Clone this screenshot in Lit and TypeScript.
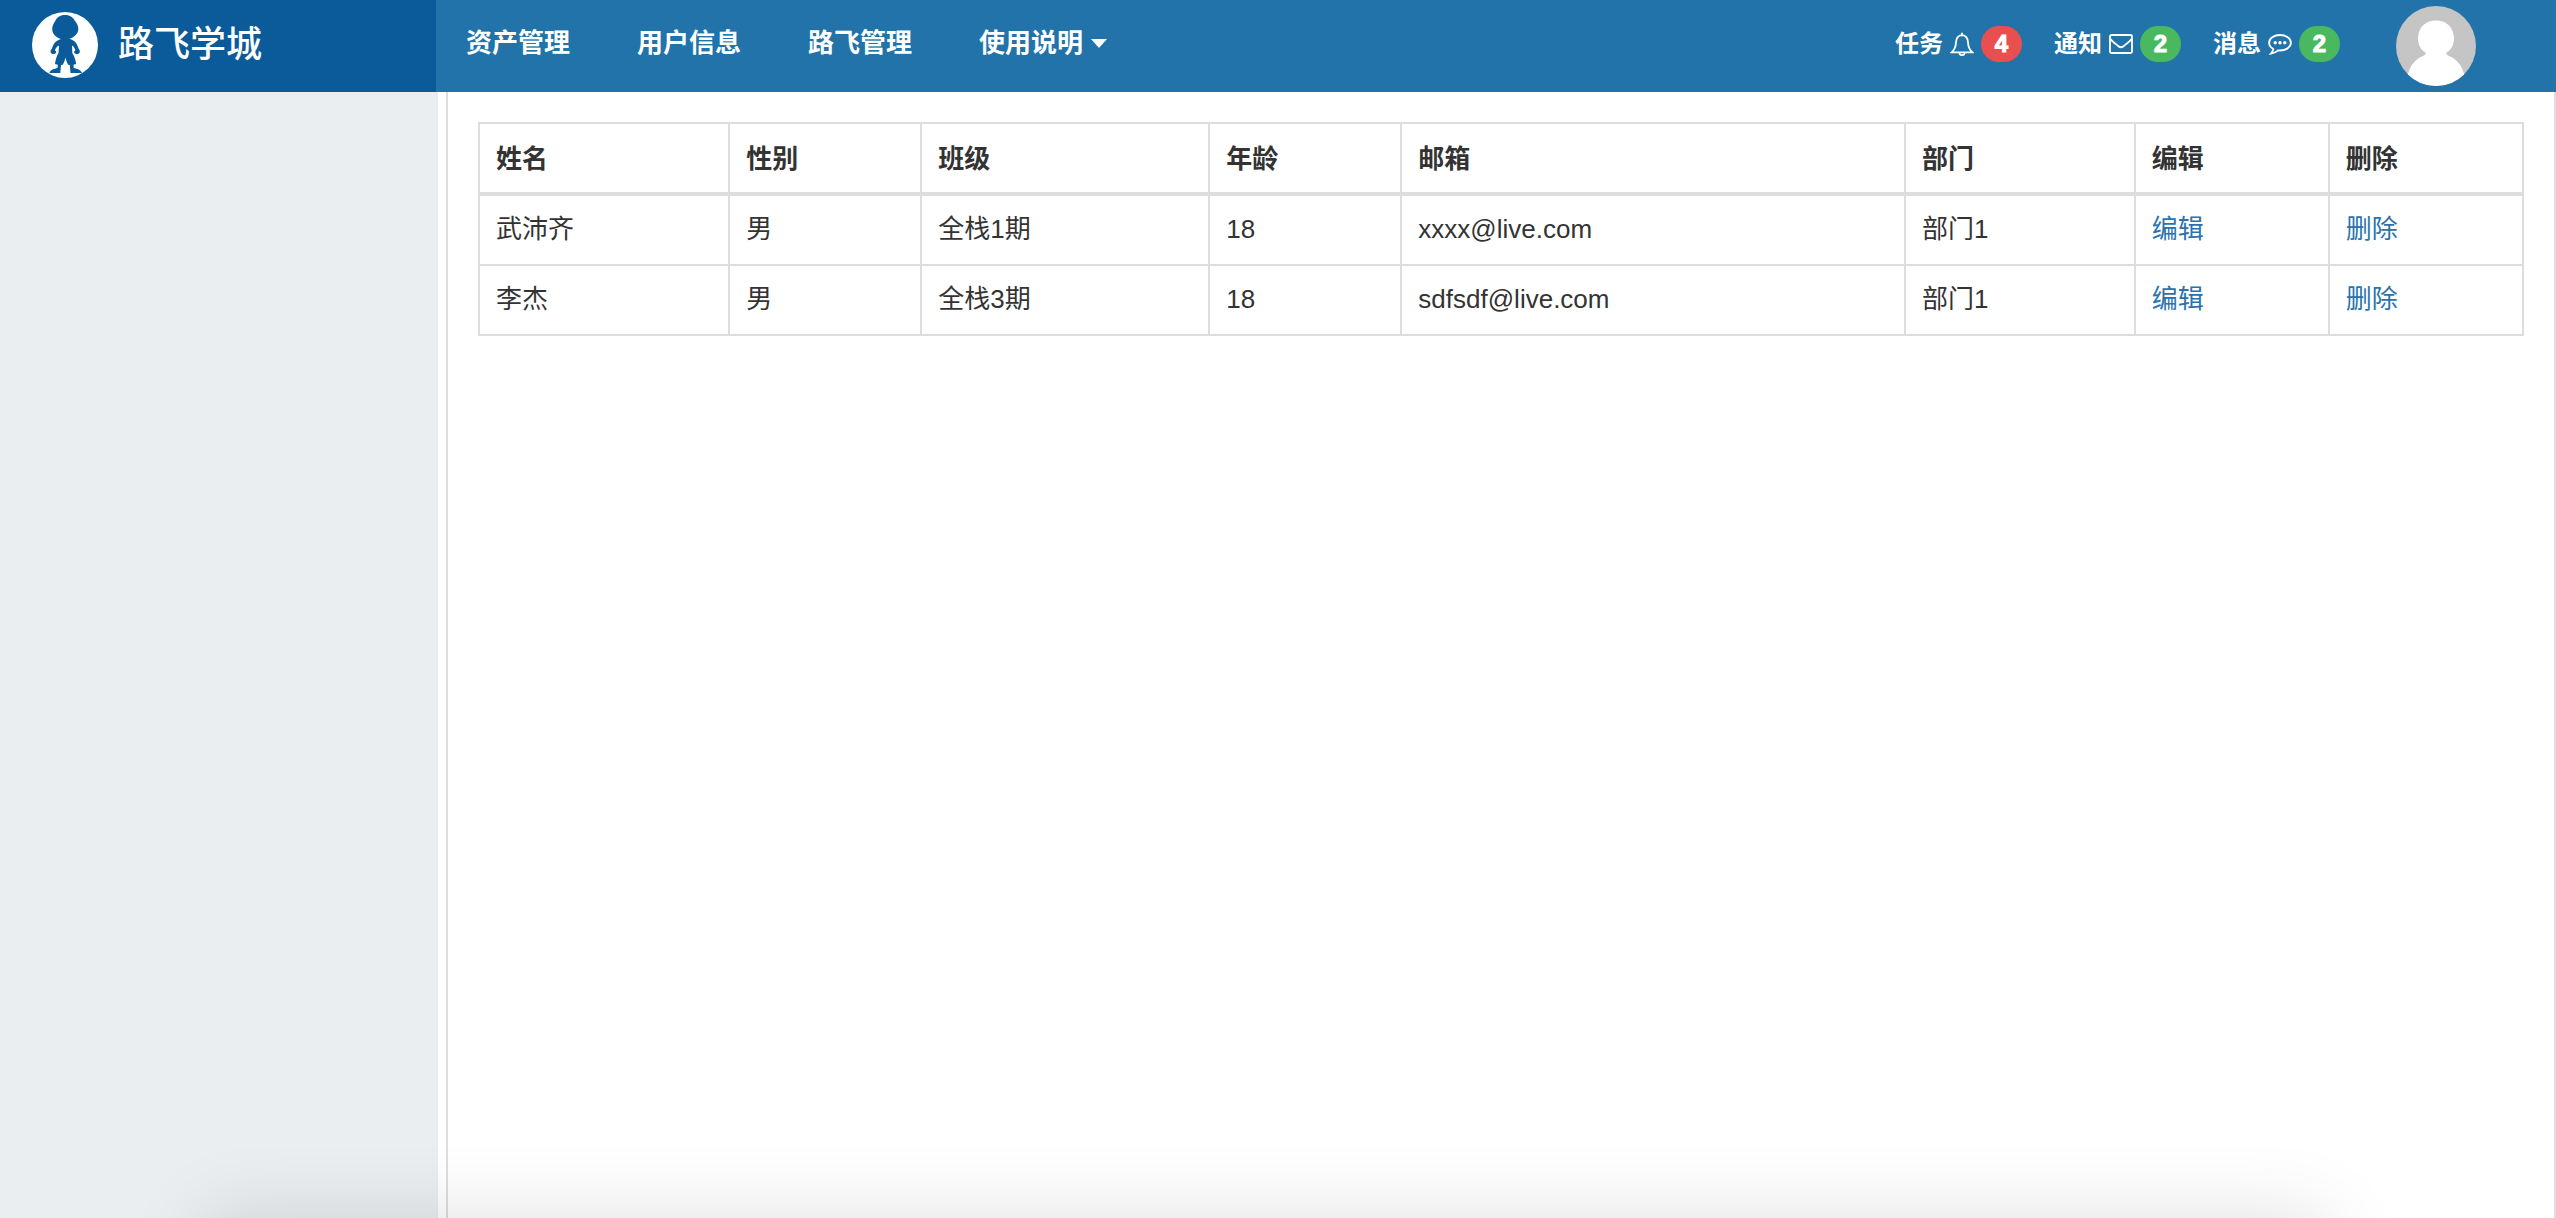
import { LitElement, html, css, svg } from "lit";
import { customElement, property } from "lit/decorators.js";

interface Student {
  name: string;
  gender: string;
  group: string;
  age: number;
  email: string;
  department: string;
}

const students: Student[] = [
  { name: "武沛齐", gender: "男", group: "全栈1期", age: 18, email: "xxxx@live.com", department: "部门1" },
  { name: "李杰", gender: "男", group: "全栈3期", age: 18, email: "sdfsdf@live.com", department: "部门1" },
];

const icons = {
  bell: svg`
    <path d="M12 3.2C8 3.600 6 7 5.900 11 5.800 15.500 4.400 17.800 1.600 20.300h20.800c-2.800-2.500-4.200-4.800-4.300-9.300C18 7 16 3.600 12 3.200z"/>
    <path d="M12 3.200V.8M9.400 20.800a2.600 2.400 0 0 0 5.200 0"/>`,
  mail: svg`
    <rect x="1" y="3" width="22" height="18" rx="1.500"/>
    <path d="M1.200 6.800c2.200 2.600 5.300 4.900 8.300 7.400 1.700 1.400 3.300 1.400 5 0 3-2.500 6.100-4.800 8.300-7.400"/>`,
  chat: svg`
    <path d="M12 3C6 3 1.100 6.400 1.100 10.800c0 2.600 1.600 4.800 4.200 6.200-.3 1.900-1.100 3.300-2.400 4.700 2.800-.4 5.300-1.500 7.200-3.300.6.100 1.300.1 1.900.1 6 0 10.900-3.400 10.900-7.700S18 3 12 3z"/>
    <g fill="currentColor" stroke="none"><circle cx="7.200" cy="10.800" r="1.700"/><circle cx="12" cy="10.800" r="1.700"/><circle cx="16.800" cy="10.800" r="1.700"/></g>`,
};

@customElement("notice-link")
export class NoticeLink extends LitElement {
  @property() label = "";
  @property() icon: keyof typeof icons = "bell";
  @property({ type: Number }) count = 0;
  @property() tone = "green";

  static styles = css`
    :host { display: block; }
    .link {
      display: flex;
      align-items: center;
      color: #fff;
      font-size: 24px;
      line-height: 36px;
      font-weight: 700;
      text-decoration: none;
    }
    .icon {
      width: 24px;
      height: 24px;
      margin: 0 7px;
      fill: none;
      stroke: currentColor;
      stroke-width: 1.8;
    }
    .badge {
      box-sizing: border-box;
      min-width: 41px;
      padding: 0 12px;
      border-radius: 20px;
      background: #4ab85f;
      text-align: center;
      -webkit-text-stroke: 1px #fff;
    }
    .red { background: #e8504f; }
  `;

  render() {
    return html`<a class="link" href="#">
      <span>${this.label}</span>
      <svg class="icon" viewBox="0 0 24 24" aria-hidden="true">${icons[this.icon]}</svg>
      <span class="badge ${this.tone}">${this.count}</span>
    </a>`;
  }
}

@customElement("app-root")
export class AppRoot extends LitElement {
  static styles = css`
    :host {
      display: flex;
      flex-direction: column;
      position: relative;
      min-height: 100vh;
      overflow: hidden;
      background: #fff;
      color: #333;
      font-family: "Liberation Sans", "Noto Sans CJK SC", sans-serif;
      font-size: 26px;
      line-height: 36px;
    }
    a { color: #2a73ad; text-decoration: none; }
    .header {
      display: flex;
      height: 92px;
      background: #2173a9;
    }
    .brand {
      box-sizing: border-box;
      display: flex;
      align-items: center;
      gap: 20px;
      flex: 0 0 436px;
      padding: 0 32px 2px;
      background: #0b5b9a;
      color: #fff;
      font-size: 36px;
      line-height: 48px;
      font-weight: 500;
    }
    .logo { width: 66px; height: 66px; }
    .nav {
      display: flex;
      align-items: center;
      gap: 67px;
      flex: 1;
      padding: 0 30px 6px;
    }
    .nav-link {
      display: flex;
      align-items: center;
      gap: 8px;
      color: #fff;
      font-weight: 700;
    }
    .caret {
      border: 8px solid transparent;
      border-top: 9px solid #fff;
      border-bottom: 0;
    }
    .notices {
      display: flex;
      align-items: center;
      gap: 32px;
      padding: 0 56px 4px 0;
    }
    .account {
      display: flex;
      align-items: center;
      padding-right: 80px;
    }
    .avatar { display: block; width: 80px; height: 80px; }
    .body { display: flex; flex: 1; }
    .sidebar {
      box-sizing: border-box;
      flex: 0 0 438px;
      background: #eaeef1;
      border-right: 2px solid #ebe9f5;
    }
    .main {
      flex: 1;
      margin-left: 8px;
      padding: 30px;
      border: solid #ddd;
      border-width: 0 2px;
    }
    .table {
      width: 100%;
      table-layout: fixed;
      border-collapse: collapse;
    }
    .table th, .table td {
      padding: 15px 16px 17px;
      border: 2px solid #ddd;
      text-align: left;
    }
    .table thead th {
      padding: 17px 16px 15px;
      border-bottom-width: 4px;
    }
    .c-name { width: 12.25%; }
    .c-short { width: 9.4%; }
    .c-group { width: 14.1%; }
    .c-mail { width: 24.65%; }
    .c-dept { width: 11.25%; }
    .c-action { width: 9.5%; }
    .dock-shadow {
      position: absolute;
      top: 100%;
      left: 8%;
      right: 9%;
      height: 120px;
      box-shadow: 0 0 80px rgba(0, 0, 0, 0.13);
      pointer-events: none;
    }
  `;

  render() {
    return html`
      <header class="header">
        <a class="brand" href="#">
          <svg class="logo" viewBox="0 0 66 66" aria-hidden="true">
            <circle cx="33" cy="33" r="33" fill="#fff"/>
            <g fill="#0b5b9a">
              <path d="M33 3c4 0 7.500 1.500 9.700 5.500 2.500 3 3.900 6 3.600 9C45.800 23 40 27.500 33 27.500S20.500 23 20.200 17.500c-.2-3 1.300-6 3.300-9C25.500 4.500 29 3 33 3z"/>
              <path d="M29 27H38C42 28 45 31 46.500 36.500C48 38 48.300 40 47.200 41.300C46 42.500 43.500 42.400 42.300 41C41.800 40 42.300 39 43.300 38.600C42.800 36 41.800 34.500 40 33.500L40.300 41C42.500 44 43.500 48 44.200 52L41.500 52.800L41.800 56C45 57 49 57.500 50 61H38.500L37.800 53L36 52.800C34.800 50.500 34 48 33.500 45.500C33 48 32 50.500 30.800 52.800L29 53L28.300 61H17.500C18 57.500 22.500 57 25.500 56L25.800 52.800L23 52C23.500 48 24.500 44 26.500 41L27 33.500C25 34.500 23.500 36 23 38.600C24 39 24.600 40 24 41C22.800 42.400 20.300 42.500 19.200 41.300C18 40 18.500 38 20 36.500C21.500 31 25 28 29 27Z"/>
            </g>
          </svg>
          <span>路飞学城</span>
        </a>
        <nav class="nav">
          <a class="nav-link" href="#">资产管理</a>
          <a class="nav-link" href="#">用户信息</a>
          <a class="nav-link" href="#">路飞管理</a>
          <a class="nav-link" href="#">使用说明<span class="caret"></span></a>
        </nav>
        <div class="notices">
          <notice-link label="任务" icon="bell" count="4" tone="red"></notice-link>
          <notice-link label="通知" icon="mail" count="2"></notice-link>
          <notice-link label="消息" icon="chat" count="2"></notice-link>
        </div>
        <a class="account" href="#" aria-label="账户">
          <svg class="avatar" viewBox="0 0 80 80" aria-hidden="true">
            <clipPath id="disc"><circle cx="40" cy="40" r="40"/></clipPath>
            <g clip-path="url(#disc)">
              <rect width="80" height="80" fill="#c5c5c5"/>
              <path fill="#fff" d="M40 14.500C51 14.500 58 22 58 32.500C58 39 55 44 50.500 46.500C50 48 51 49 53 50C61 53 66 60 68 68V80H12V68C14 60 19 53 27 50C29 49 30 48 29.500 46.500C25 44 22 39 22 32.500C22 22 29 14.500 40 14.500Z"/>
            </g>
          </svg>
        </a>
      </header>
      <div class="body">
        <aside class="sidebar"></aside>
        <main class="main">
          <table class="table">
            <colgroup>
              <col class="c-name"><col class="c-short"><col class="c-group"><col class="c-short">
              <col class="c-mail"><col class="c-dept"><col class="c-action"><col class="c-action">
            </colgroup>
            <thead>
              <tr>
                <th>姓名</th><th>性别</th><th>班级</th><th>年龄</th>
                <th>邮箱</th><th>部门</th><th>编辑</th><th>删除</th>
              </tr>
            </thead>
            <tbody>
              ${students.map((s) => html`<tr>
                <td>${s.name}</td><td>${s.gender}</td><td>${s.group}</td><td>${s.age}</td>
                <td>${s.email}</td><td>${s.department}</td>
                <td><a href="#">编辑</a></td><td><a href="#">删除</a></td>
              </tr>`)}
            </tbody>
          </table>
        </main>
      </div>
      <div class="dock-shadow"></div>
    `;
  }
}
